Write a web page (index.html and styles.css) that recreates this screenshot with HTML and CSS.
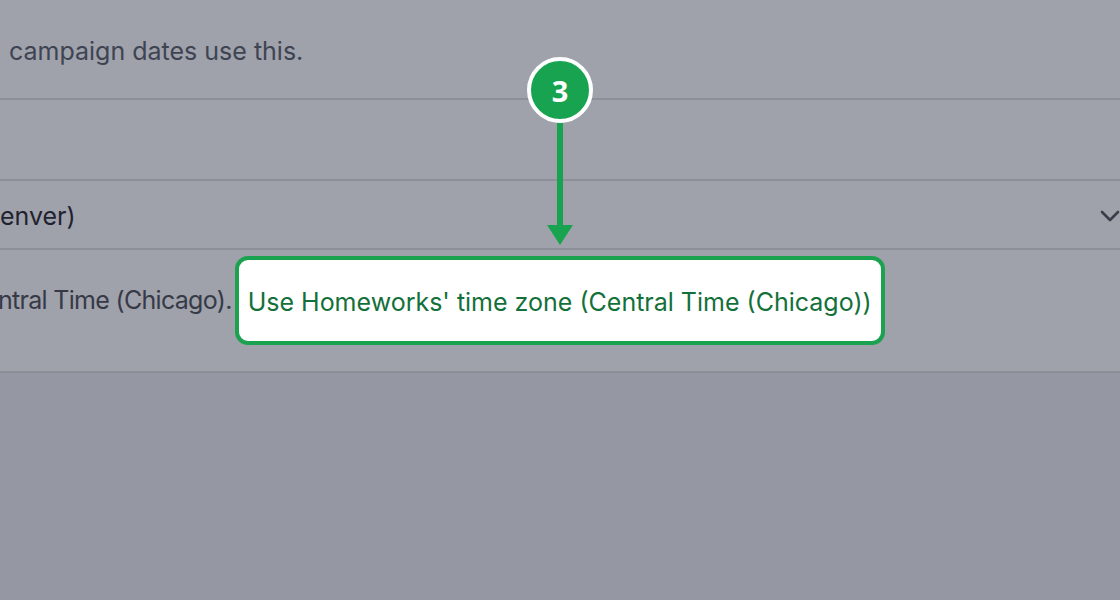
FILE: index.html
```html
<!DOCTYPE html>
<html lang="en">
<head>
<meta charset="utf-8">
<title>Time zone setting</title>
<link rel="stylesheet" href="styles.css">
</head>
<body>
<div class="page">
  <section class="card">
    <div class="row row-desc">
      <p class="desc">campaign dates use this.</p>
    </div>
    <div class="row row-empty"></div>
    <div class="row row-select">
      <span class="select-value">enver)</span>
      <svg class="chevron" width="20" height="14" viewBox="0 0 20 14" aria-hidden="true">
        <polyline points="2,3 10,11 18,3" fill="none" stroke="#3a3e4a" stroke-width="2.6" stroke-linecap="round" stroke-linejoin="round"/>
      </svg>
    </div>
    <div class="row row-help">
      <span class="help-text">ntral Time (Chicago).</span>
      <span class="highlight"><a class="help-link" href="#">Use Homeworks' time zone (Central Time (Chicago))</a></span>
    </div>
  </section>
  <div class="annotation">
    <div class="badge">3</div>
    <div class="shaft"></div>
    <div class="arrowhead"></div>
  </div>
</div>
</body>
</html>
```

FILE: styles.css
```css
html, body {
  margin: 0;
  padding: 0;
}
body {
  width: 1120px;
  height: 600px;
  overflow: hidden;
  background: #9597a2;
  font-family: "Inter", "Liberation Sans", sans-serif;
}
.page {
  position: relative;
  height: 600px;
}
.card {
  background: #9fa1ab;
  border-bottom: 2px solid #8b8d97;
  display: flex;
  flex-direction: column;
}
.row {
  box-sizing: border-box;
  border-bottom: 2px solid #8c8e98;
}
.row-desc {
  height: 100px;
  padding-left: 9px;
  padding-top: 34px;
}
.desc {
  margin: 0;
  font-size: 25px;
  line-height: 34px;
  color: #3e4452;
}
.row-empty {
  height: 81px;
}
.row-select {
  height: 69px;
  display: flex;
  align-items: center;
  justify-content: space-between;
}
.select-value {
  font-size: 25px;
  line-height: 34px;
  color: #1f2330;
  padding-top: 2px;
}
.chevron {
  margin-top: 2px;
}
.row-help {
  height: 121px;
  border-bottom: none;
  display: flex;
  align-items: flex-start;
  padding-top: 6px;
}
.help-text {
  font-size: 25px;
  line-height: 89px;
  color: #363a47;
  letter-spacing: -0.7px;
  margin-left: -2px;
  white-space: nowrap;
}
.highlight {
  margin-left: 3px;
  box-sizing: border-box;
  height: 89px;
  padding: 0 9px;
  border: 4px solid #1ba24f;
  border-radius: 13px;
  background: #ffffff;
  display: flex;
  align-items: center;
  white-space: nowrap;
}
.help-link {
  font-size: 25px;
  line-height: 34px;
  color: #13703a;
  text-decoration: none;
  padding-top: 2px;
}
.annotation {
  position: absolute;
  left: 527px;
  top: 57px;
  width: 66px;
  display: flex;
  flex-direction: column;
  align-items: center;
}
.badge {
  box-sizing: border-box;
  width: 66px;
  height: 66px;
  border-radius: 50%;
  border: 4px solid #ffffff;
  background: #17a350;
  color: #ffffff;
  font-family: "Open Sans", "Noto Sans", sans-serif;
  font-weight: 700;
  font-size: 29px;
  display: flex;
  align-items: center;
  justify-content: center;
}
.shaft {
  width: 6px;
  height: 104px;
  background: #17a350;
}
.arrowhead {
  width: 0;
  height: 0;
  border-left: 13px solid transparent;
  border-right: 13px solid transparent;
  border-top: 20px solid #17a350;
  margin-top: -2px;
}
```
